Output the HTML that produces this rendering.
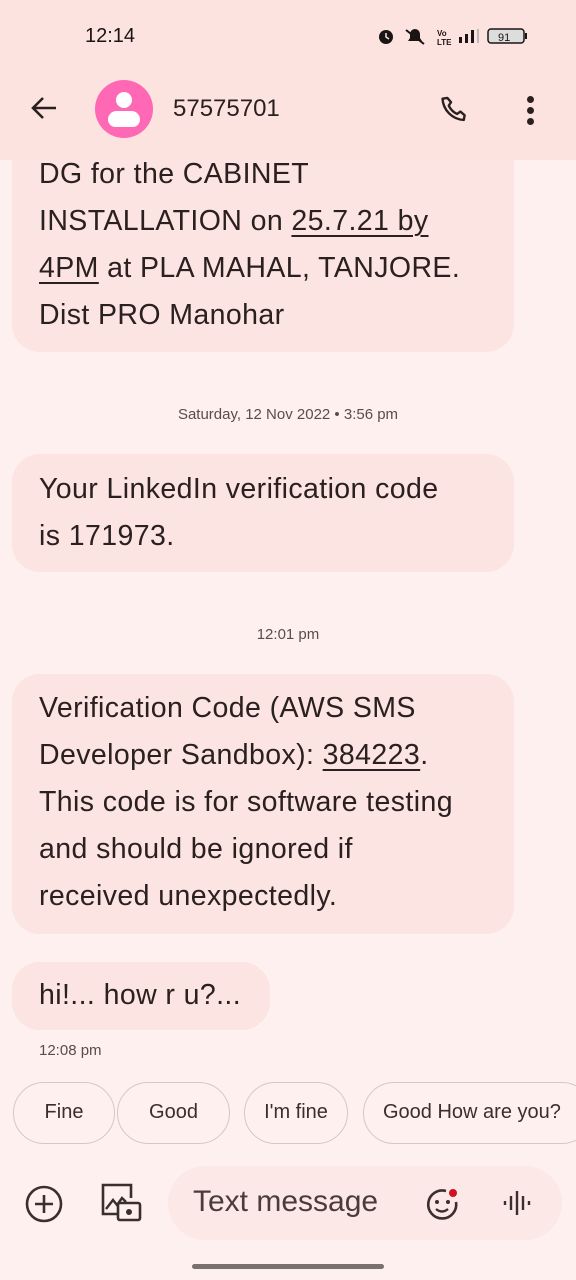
<!DOCTYPE html>
<html><head><meta charset="utf-8"><style>
*{margin:0;padding:0;box-sizing:border-box}
body{width:576px;height:1280px;overflow:hidden;background:#fdf0ee;font-family:"Liberation Sans",sans-serif;color:#2b2020;position:relative}
.hdr{position:absolute;left:0;top:0;width:576px;height:160px;background:#fde3df;z-index:2}
.bub{position:absolute;left:12px;background:#fbe4e1;border-radius:28px;font-size:28.5px;line-height:47px;padding:0 27px;letter-spacing:0.4px;white-space:nowrap}
.u{text-decoration:underline;text-underline-offset:5px;text-decoration-thickness:2px}
.ts{position:absolute;width:576px;text-align:center;font-size:15px;color:#5a4c4c}
.chip{position:absolute;top:1082px;height:62px;border:1.5px solid #d9c5c3;border-radius:31px;font-size:20px;line-height:59px;text-align:center;color:#3a2e2e}
</style></head><body>
<div class="hdr">
 <div style="position:absolute;left:85px;top:25px;font-size:20px;color:#1a1414">12:14</div>
 <svg style="position:absolute;left:376px;top:26px" width="160" height="22" viewBox="0 0 160 22">
  <circle cx="10" cy="11" r="7" fill="#1a1414"/><path d="M10 7v4l3 2" stroke="#fde3df" stroke-width="1.5" fill="none"/>
  <path d="M32 15h14l-2-3v-4a5 5 0 0 0-10 0v4z" fill="#1a1414"/><path d="M30 4l18 14" stroke="#1a1414" stroke-width="2"/>
  <text x="61" y="10" font-size="8" font-family="Liberation Sans" fill="#1a1414" font-weight="bold">Vo</text><text x="61" y="19" font-size="8" font-family="Liberation Sans" fill="#1a1414" font-weight="bold">LTE</text>
  <rect x="83" y="11" width="3" height="6" fill="#1a1414"/><rect x="89" y="8" width="3" height="9" fill="#1a1414"/><rect x="95" y="4" width="3" height="13" fill="#1a1414"/><rect x="101" y="3" width="2" height="14" fill="#bbb"/>
  <rect x="112" y="3" width="36" height="14" rx="3" fill="#ddd" stroke="#1a1414" stroke-width="1.5"/><rect x="149" y="7" width="2" height="6" fill="#1a1414"/>
  <text x="122" y="15" font-size="11" font-family="Liberation Sans" fill="#1a1414">91</text>
 </svg>
 <svg style="position:absolute;left:28px;top:94px" width="32" height="28" viewBox="0 0 32 28"><path d="M28 14H6M15 4L5 14l10 10" stroke="#2b2020" stroke-width="2.6" fill="none"/></svg>
 <div style="position:absolute;left:95px;top:80px;width:58px;height:58px;border-radius:50%;background:#fe68b4"></div>
 <div style="position:absolute;left:116px;top:92px;width:16px;height:16px;border-radius:50%;background:#fff"></div>
 <div style="position:absolute;left:108px;top:111px;width:32px;height:16px;border-radius:16px 16px 14px 14px;background:#fff"></div>
 <div style="position:absolute;left:173px;top:95px;font-size:24px;color:#2b2020">57575701</div>
 <svg style="position:absolute;left:438px;top:93px" width="34" height="34" viewBox="0 0 24 24"><path d="M6.6 3.5l2.6 3-1.6 2.4c1.2 2.6 3.2 4.6 5.8 5.9l2.4-1.7 3 2.6-.6 3.3c-8-.3-14.6-6.9-15-15z" stroke="#2b2020" stroke-width="1.7" fill="none" stroke-linejoin="round"/></svg>
 <div style="position:absolute;left:527px;top:96px;width:7px;height:7px;border-radius:50%;background:#2b2020;box-shadow:0 11px 0 #2b2020,0 22px 0 #2b2020"></div>
</div>

<div class="bub" style="top:120px;height:232px;width:502px;padding-top:31px">DG for the CABINET<br>INSTALLATION on <span class="u">25.7.21 by</span><br><span class="u">4PM</span> at PLA MAHAL, TANJORE.<br>Dist PRO Manohar</div>
<div class="ts" style="top:406px">Saturday, 12 Nov 2022 • 3:56 pm</div>
<div class="bub" style="top:454px;height:118px;width:502px;padding-top:12px">Your LinkedIn verification code<br>is 171973.</div>
<div class="ts" style="top:626px">12:01 pm</div>
<div class="bub" style="top:674px;height:260px;width:502px;padding-top:11px">Verification Code (AWS SMS<br>Developer Sandbox): <span class="u">384223</span>.<br>This code is for software testing<br>and should be ignored if<br>received unexpectedly.</div>
<div class="bub" style="top:962px;height:68px;width:258px;padding-top:10px">hi!... how r u?...</div>
<div class="ts" style="top:1042px;left:39px;width:auto;text-align:left">12:08 pm</div>

<div class="chip" style="left:13px;width:102px">Fine</div>
<div class="chip" style="left:117px;width:113px">Good</div>
<div class="chip" style="left:244px;width:104px">I'm fine</div>
<div class="chip" style="left:363px;width:230px;text-align:left;padding-left:19px">Good How are you?</div>

<svg style="position:absolute;left:24px;top:1184px" width="40" height="40" viewBox="0 0 40 40"><circle cx="20" cy="20" r="17" stroke="#3a2e2e" stroke-width="2.6" fill="none"/><path d="M20 11v18M11 20h18" stroke="#3a2e2e" stroke-width="2.6"/></svg>
<svg style="position:absolute;left:100px;top:1182px" width="42" height="42" viewBox="0 0 42 42"><path d="M17 32H3V3h28v13" stroke="#3a2e2e" stroke-width="2.6" fill="none"/><path d="M6 27l7-9 4 5 5-7 4 4" stroke="#3a2e2e" stroke-width="2.4" fill="none"/><rect x="18" y="21" width="22" height="17" rx="2" stroke="#3a2e2e" stroke-width="2.6" fill="none"/><circle cx="29" cy="30" r="3" fill="#3a2e2e"/></svg>
<div style="position:absolute;left:168px;top:1166px;width:394px;height:74px;border-radius:37px;background:#fce8e6"></div>
<div style="position:absolute;left:193px;top:1185px;font-size:30px;color:#4a3c3c">Text message</div>
<svg style="position:absolute;left:424px;top:1184px" width="40" height="40" viewBox="0 0 40 40"><path d="M32 18a14 14 0 1 1-10-11" stroke="#3a2e2e" stroke-width="2.6" fill="none"/><circle cx="13" cy="18" r="2" fill="#3a2e2e"/><circle cx="24" cy="18" r="2" fill="#3a2e2e"/><path d="M12 25q6 5 12 0" stroke="#3a2e2e" stroke-width="2.4" fill="none"/><circle cx="29" cy="9" r="4" fill="#d01020"/></svg>
<svg style="position:absolute;left:502px;top:1188px" width="30" height="30" viewBox="0 0 30 30"><path d="M3 13v4M9 8v14M15 3v24M21 8v14M27 13v4" stroke="#3a2e2e" stroke-width="2.4"/></svg>
<div style="position:absolute;left:192px;top:1264px;width:192px;height:5px;border-radius:3px;background:#7a7070"></div>
</body></html>
